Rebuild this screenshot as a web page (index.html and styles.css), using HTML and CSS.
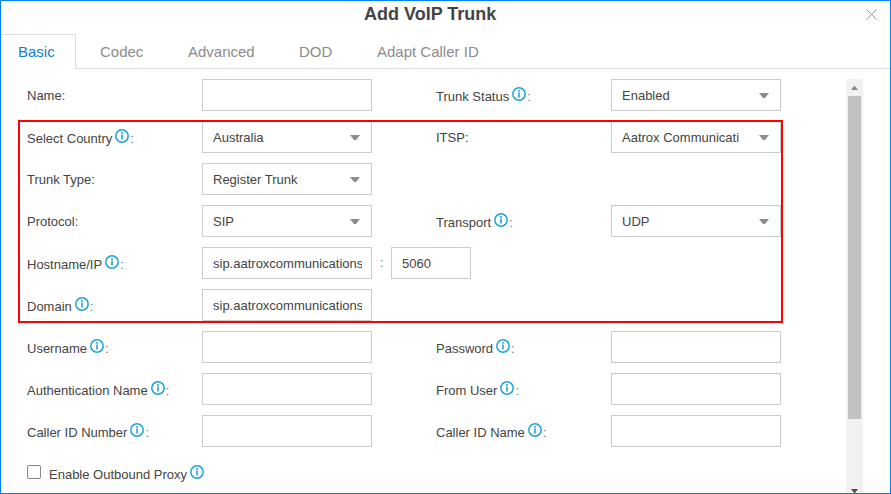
FILE: index.html
```
<!DOCTYPE html>
<html lang="en">
<head>
<meta charset="utf-8">
<title>Add VoIP Trunk</title>
<link rel="stylesheet" href="styles.css">
</head>
<body>
<svg class="defs" width="0" height="0">
  <symbol id="info" viewBox="0 0 14 14">
    <circle cx="7" cy="7" r="6.2" fill="none" stroke="#1da3d6" stroke-width="1.5"/>
    <path d="M7 3v1.7M7 5.4v5.200" fill="none" stroke="#1da3d6" stroke-width="1.6"/>
  </symbol>
  <symbol id="caret" viewBox="0 0 10 5"><path d="M0 0h10L6 5H4z" fill="#8c8c8c"/></symbol>
</svg>
<div class="dialog">
  <header class="header">
    <h1 class="title">Add VoIP Trunk</h1>
    <svg class="close" viewBox="0 0 11 11"><path d="M.5.5l10 10M10.500.5l-10 10" stroke="#999" fill="none"/></svg>
  </header>
  <nav class="tabs">
    <span class="tab active">Basic</span>
    <span class="tab codec">Codec</span>
    <span class="tab advanced">Advanced</span>
    <span class="tab dod">DOD</span>
    <span class="tab">Adapt Caller ID</span>
  </nav>
  <div class="body">
    <div class="form">
      <div class="row">
        <div class="label">Name:</div><div class="field"></div>
        <div class="label tip">Trunk Status<svg class="info"><use href="#info"/></svg><i>:</i></div>
        <div class="field"><span class="value">Enabled</span><svg class="caret"><use href="#caret"/></svg></div>
      </div>
      <div class="row">
        <div class="label tip">Select Country<svg class="info"><use href="#info"/></svg><i>:</i></div>
        <div class="field"><span class="value">Australia</span><svg class="caret"><use href="#caret"/></svg></div>
        <div class="label">ITSP:</div>
        <div class="field"><span class="value">Aatrox Communicati</span><svg class="caret"><use href="#caret"/></svg></div>
      </div>
      <div class="row">
        <div class="label">Trunk Type:</div>
        <div class="field"><span class="value">Register Trunk</span><svg class="caret"><use href="#caret"/></svg></div>
      </div>
      <div class="row">
        <div class="label">Protocol:</div>
        <div class="field"><span class="value">SIP</span><svg class="caret"><use href="#caret"/></svg></div>
        <div class="label tip">Transport<svg class="info"><use href="#info"/></svg><i>:</i></div>
        <div class="field"><span class="value">UDP</span><svg class="caret"><use href="#caret"/></svg></div>
      </div>
      <div class="row host">
        <div class="label tip">Hostname/IP<svg class="info"><use href="#info"/></svg><i>:</i></div>
        <div class="field input"><span class="value">sip.aatroxcommunications</span></div>
        <div class="sep">:</div>
        <div class="field input port"><span class="value">5060</span></div>
      </div>
      <div class="row">
        <div class="label tip">Domain<svg class="info"><use href="#info"/></svg><i>:</i></div>
        <div class="field input"><span class="value">sip.aatroxcommunications</span></div>
      </div>
      <div class="row">
        <div class="label tip">Username<svg class="info"><use href="#info"/></svg><i>:</i></div><div class="field"></div>
        <div class="label tip">Password<svg class="info"><use href="#info"/></svg><i>:</i></div><div class="field"></div>
      </div>
      <div class="row">
        <div class="label tip">Authentication Name<svg class="info"><use href="#info"/></svg><i>:</i></div><div class="field"></div>
        <div class="label tip">From User<svg class="info"><use href="#info"/></svg><i>:</i></div><div class="field"></div>
      </div>
      <div class="row">
        <div class="label tip">Caller ID Number<svg class="info"><use href="#info"/></svg><i>:</i></div><div class="field"></div>
        <div class="label tip">Caller ID Name<svg class="info"><use href="#info"/></svg><i>:</i></div><div class="field"></div>
      </div>
      <div class="check">
        <span class="box"></span>
        <div class="label tip">Enable Outbound Proxy<svg class="info"><use href="#info"/></svg></div>
      </div>
    </div>
    <div class="scrollbar">
      <svg class="arrow" viewBox="0 0 7 4"><path d="M3 0h1l3 4H0z" fill="#8c8c8c"/></svg>
      <div class="thumb"></div>
      <svg class="arrow down" viewBox="0 0 7 4"><path d="M0 0h7L4 4H3z" fill="#505050"/></svg>
    </div>
  </div>
  <div class="highlight"></div>
</div>
</body>
</html>
```
FILE: styles.css
```
* { box-sizing: border-box; }
body { margin: 0; background: #fff; font-family: "Liberation Sans", Arial, sans-serif; font-size: 13px; color: #444; }
.defs { position: absolute; }
.dialog { position: relative; width: 891px; height: 494px; border: 1px solid #0080ff; overflow: hidden; display: flex; flex-direction: column; }
.header { height: 33px; flex: none; display: flex; justify-content: flex-end; padding: 0 13px 0 363px; }
.title { margin: 0 auto 0 0; font-size: 18px; line-height: 26px; font-weight: bold; color: #444; white-space: nowrap; }
.close { width: 11px; height: 11px; margin-top: 8px; }
.tabs { height: 35px; flex: none; display: flex; box-shadow: inset 0 -1px #ddd; font-size: 15px; line-height: 34px; color: #8c8c8c; }
.tab { white-space: nowrap; padding-top: 1px; }
.active { width: 75px; padding: 0 0 0 17px; background: #fff; color: #0f7fcc; border: solid #ddd; border-width: 1px 1px 0 0; margin-right: 24px; }
.codec { width: 88px; }
.advanced { width: 111px; }
.dod { width: 78px; }
.body { flex: 1; min-height: 0; display: flex; justify-content: space-between; padding: 10px 27px 0 26px; }
.form { display: flex; flex-direction: column; gap: 10px; }
.row { display: grid; grid-template-columns: 175px 170px 64px 175px 170px; grid-template-rows: 32px; height: 32px; flex: none; }
.row > :nth-child(3) { grid-column: 4; }
.row.host { grid-template-columns: 175px 170px 19px 80px; }
.row.host > :nth-child(3) { grid-column: 3; }
.label { display: flex; align-items: center; white-space: nowrap; line-height: 28px; padding-top: 2px; }
.label.tip { padding-top: 4px; }
.label i { font-style: normal; margin-left: 1px; color: #777; }
.info { width: 14px; height: 14px; margin: -6px 0 0 3px; flex: none; }
.field { border: 1px solid #ccc; background: #fff; padding: 2px 11px 0 10px; display: flex; align-items: center; justify-content: space-between; overflow: hidden; }
.value { width: 117px; overflow: hidden; white-space: nowrap; line-height: 28px; }
.input { padding-right: 9px; }
.input .value { width: 149px; }
.port .value { width: 59px; }
.caret { width: 10px; height: 5px; flex: none; margin-top: -1px; }
.sep { text-align: center; line-height: 32px; color: #777; }
.check { display: flex; height: 32px; align-items: center; margin-top: -1px; }
.check .label { margin: 2px 0 0 8px; }
.box { width: 14px; height: 14px; border: 1px solid #858585; border-radius: 2px; margin-top: -1px; }
.scrollbar { width: 17px; background: #f1f1f1; display: flex; flex-direction: column; align-items: center; }
.arrow { width: 7px; height: 4px; margin-top: 7px; flex: none; }
.down { margin: auto 0 0; }
.thumb { width: 13px; height: 323px; margin-top: 6px; background: #c1c1c1; flex: none; }
.highlight { position: absolute; left: 17px; top: 119px; width: 765px; height: 203px; border: 2px solid #f00; }
```
